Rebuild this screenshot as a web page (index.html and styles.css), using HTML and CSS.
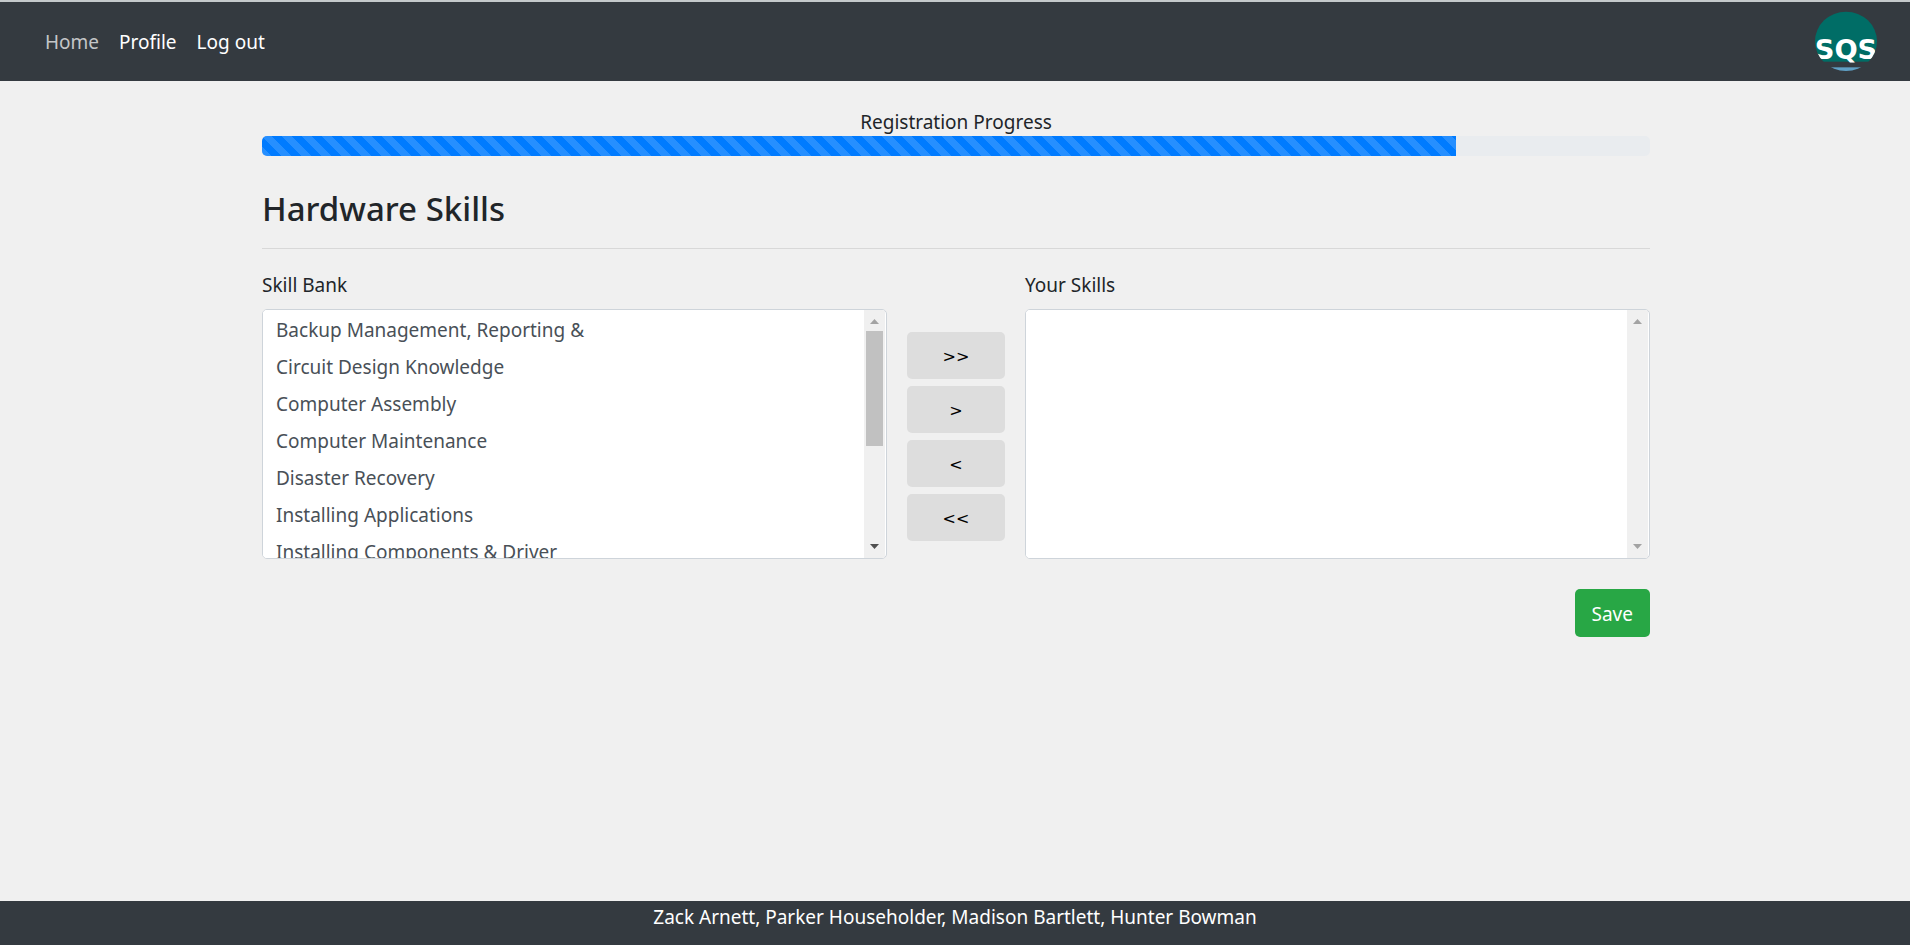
FILE: index.html
```html
<!DOCTYPE html>
<html lang="en">
<head>
<meta charset="utf-8">
<title>Hardware Skills</title>
<link rel="stylesheet" href="styles.css">
</head>
<body>
<header class="navbar">
  <nav class="nav-links">
    <a class="nav-link nav-link-muted" href="#home">Home</a>
    <a class="nav-link" href="#profile">Profile</a>
    <a class="nav-link" href="#logout">Log out</a>
  </nav>
  <svg class="logo" viewBox="0 0 186 180" role="img" aria-label="SQS">
    <clipPath id="disc"><ellipse cx="93" cy="91" rx="93" ry="89"/></clipPath>
    <g clip-path="url(#disc)">
      <rect width="186" height="152" fill="#006d66"/>
      <rect y="169" width="186" height="11" fill="#5f9fc4"/>
      <text class="logo-text" x="93" y="145" text-anchor="middle">SQS</text>
    </g>
  </svg>
</header>
<main class="container">
  <div class="progress-label" id="progress-label">Registration Progress</div>
  <div class="progress" role="progressbar" aria-labelledby="progress-label" aria-valuenow="86" aria-valuemin="0" aria-valuemax="100">
    <div class="progress-bar" style="width: 86%"></div>
  </div>
  <h2 class="title">Hardware Skills</h2>
  <hr class="rule">
  <form class="skills">
    <div class="skill-col">
      <label class="skill-label" for="bank">Skill Bank</label>
      <div class="list-box">
        <select class="skill-list" id="bank" multiple>
          <option>Backup Management, Reporting &amp;</option>
          <option>Circuit Design Knowledge</option>
          <option>Computer Assembly</option>
          <option>Computer Maintenance</option>
          <option>Disaster Recovery</option>
          <option>Installing Applications</option>
          <option>Installing Components &amp; Driver</option>
        </select>
        <div class="scrollbar" aria-hidden="true">
          <svg class="arrow" viewBox="0 0 9 5"><path d="M0 5L4.500 0L9 5z"/></svg>
          <div class="track"><div class="thumb"></div></div>
          <svg class="arrow arrow-active" viewBox="0 0 9 5"><path d="M0 0L4.500 5L9 0z"/></svg>
        </div>
      </div>
    </div>
    <div class="transfer">
      <button class="transfer-btn" type="button">&gt;&gt;</button>
      <button class="transfer-btn" type="button">&gt;</button>
      <button class="transfer-btn" type="button">&lt;</button>
      <button class="transfer-btn" type="button">&lt;&lt;</button>
    </div>
    <div class="skill-col">
      <label class="skill-label" for="yours">Your Skills</label>
      <div class="list-box">
        <select class="skill-list" id="yours" multiple></select>
        <div class="scrollbar" aria-hidden="true">
          <svg class="arrow" viewBox="0 0 9 5"><path d="M0 5L4.500 0L9 5z"/></svg>
          <svg class="arrow" viewBox="0 0 9 5"><path d="M0 0L4.500 5L9 0z"/></svg>
        </div>
      </div>
    </div>
    <button class="save" type="submit">Save</button>
  </form>
</main>
<footer class="footer">Zack Arnett, Parker Householder, Madison Bartlett, Hunter Bowman</footer>
</body>
</html>
```
FILE: styles.css
```css
* { box-sizing: border-box; }
body {
  margin: 0;
  min-height: 100vh;
  display: flex;
  flex-direction: column;
  background: #f0f0f0;
  color: #212529;
  font-family: "Segoe UI", "Noto Sans", sans-serif;
  font-size: 19px;
  line-height: 30px;
}
button, select { font: inherit; }
.navbar {
  display: flex;
  align-items: center;
  justify-content: space-between;
  height: 81px;
  padding: 0 33px 0 35px;
  background: #343a40;
  border-top: 2px solid #c4c9cb;
}
.nav-links { display: flex; }
.nav-link { padding: 10px; color: #fff; text-decoration: none; }
.nav-link-muted { color: #c4c6c8; }
.logo { width: 62px; height: 60px; margin-bottom: 2px; }
.logo-text { font: bold 82px "DejaVu Sans", Verdana, sans-serif; fill: #fff; }
.container {
  width: 100%;
  max-width: 1428px;
  margin: 0 auto;
  padding: 27px 19px 0 21px;
  flex: 1;
}
.progress-label { text-align: center; line-height: 28px; }
.progress {
  height: 20px;
  border-radius: 5px;
  background: #e9ecef;
  overflow: hidden;
}
.progress-bar {
  height: 100%;
  background: #007bff linear-gradient(45deg, rgba(255,255,255,.15) 25%, transparent 25%, transparent 50%, rgba(255,255,255,.15) 50%, rgba(255,255,255,.15) 75%, transparent 75%) 0 0 / 20px 20px;
}
.title { margin: 30px 0 0; font-size: 33px; font-weight: 500; line-height: 46px; }
.rule { margin: 16px 0 21px; border: 0; border-top: 1px solid #d8d8d8; }
.skills {
  display: grid;
  grid-template-columns: 625fr 98fr 625fr;
  column-gap: 20px;
  row-gap: 30px;
}
.skill-col { display: flex; flex-direction: column; min-width: 0; }
.skill-label { margin-bottom: 9px; }
.list-box {
  display: flex;
  height: 250px;
  padding-right: 1px;
  border: 1px solid #ced4da;
  border-radius: 5px;
  background: #fff;
  overflow: hidden;
}
.skill-list {
  flex: 1;
  min-width: 0;
  height: 100%;
  padding: 5px 0 0;
  border: 0;
  background: #fff;
  color: #495057;
  outline: 0;
}
.skill-list option { min-height: 37px; padding: 2px 13px 5px; line-height: 30px; }
.scrollbar {
  width: 21px;
  display: flex;
  flex-direction: column;
  align-items: center;
  justify-content: space-between;
  padding: 9px 2px;
  background: #f0f0f0;
}
.arrow { width: 9px; height: 5px; fill: #a3a3a3; }
.arrow-active { fill: #505050; }
.track { flex: 1; align-self: stretch; margin: 7px 0; }
.thumb { height: 56%; background: #c1c1c1; }
.transfer { display: flex; flex-direction: column; gap: 7px; padding-top: 62px; }
.transfer-btn {
  height: 47px;
  padding: 2px 0 0;
  border: 0;
  border-radius: 5px;
  background: #ddd;
  color: #000;
  font-family: "DejaVu Sans", Verdana, sans-serif;
  font-size: 16px;
}
.save {
  grid-column: 3;
  justify-self: end;
  height: 48px;
  padding: 2px 17px 0;
  border: 0;
  border-radius: 5px;
  background: #28a745;
  color: #fff;
}
.footer {
  height: 44px;
  padding-top: 1px;
  background: #343a40;
  color: #fff;
  text-align: center;
}
```
